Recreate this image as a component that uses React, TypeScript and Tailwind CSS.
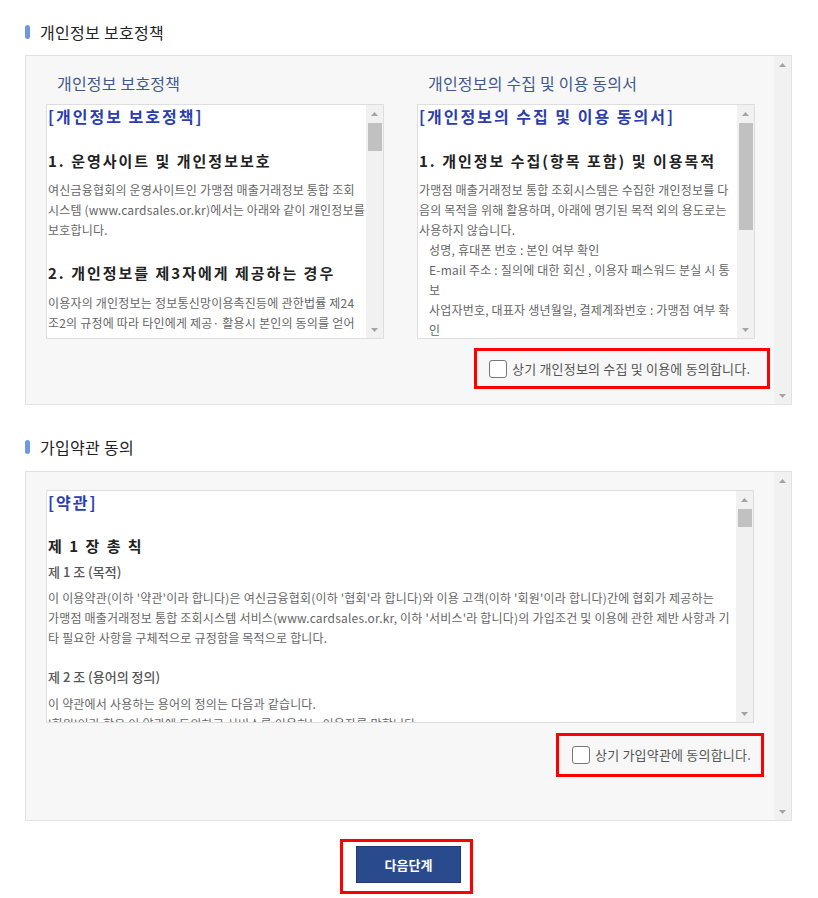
import React from "react";

// small triangle used by the fake scrollbars
function Arrow({ down = false }: { down?: boolean }) {
  return (
    <svg width="7" height="4" viewBox="0 0 7 4" className="block">
      {down ? (
        <path d="M0 0H7L3.5 4Z" fill="#a3a3a3" />
      ) : (
        <path d="M3.5 0L7 4H0Z" fill="#a3a3a3" />
      )}
    </svg>
  );
}

function ScrollBar({ thumb }: { thumb?: string }) {
  return (
    <div className="flex w-[17px] shrink-0 flex-col bg-[#f1f1f1]">
      <div className="flex h-[17px] items-center justify-center">
        <Arrow />
      </div>
      {thumb && <div className={`mt-px ml-[2px] mr-px bg-[#c1c1c1] ${thumb}`} />}
      <div className="flex-1" />
      <div className="flex h-[17px] items-center justify-center">
        <Arrow down />
      </div>
    </div>
  );
}

function Lines({ lines, className = "" }: { lines: string[]; className?: string }) {
  return (
    <div className={`text-[12px] leading-[20px] tracking-[0.2px] text-[#666] ${className}`}>
      {lines.map((l, i) => (
        <p key={i} className="whitespace-nowrap">
          {l}
        </p>
      ))}
    </div>
  );
}

function Check({ label }: { label: string }) {
  return (
    <span className="flex items-center gap-[5px]">
      <span className="h-[18px] w-[18px] shrink-0 rounded-[3px] border-[1.5px] border-[#777] bg-white" />
      <span className="whitespace-nowrap text-[13px] tracking-[0.2px] text-[#555]">{label}</span>
    </span>
  );
}

function SectionTitle({ children }: { children: React.ReactNode }) {
  return (
    <div className="flex h-[20px] items-center">
      <span className="h-[14px] w-[5px] rounded-[3px] bg-[#6f99df]" />
      <h2 className="ml-[10px] text-[16px] leading-[20px] tracking-[0.3px] text-[#222]">{children}</h2>
    </div>
  );
}

const blueHead = "text-[16px] font-semibold leading-[22px] tracking-[2px] text-[#2b3daf] whitespace-nowrap";
const blackHead = "text-[15px] font-bold leading-[22px] tracking-[2px] text-[#222] whitespace-nowrap";

export default function App() {
  return (
    <div className="w-[818px] bg-white pb-[6px] pl-[25px] pr-[26px] pt-[22px] font-['Noto_Sans_CJK_KR','Noto_Sans',sans-serif]">
      {/* 개인정보 보호정책 */}
      <SectionTitle>개인정보 보호정책</SectionTitle>
      <div className="mt-[13px] flex h-[350px] border border-[#e2e2e2] bg-[#f7f7f7]">
        <div className="min-w-0 flex-1 pt-[16px]">
          <div className="flex gap-[33px] pl-[20px]">
            <div className="w-[338px]">
              <h3 className="pl-[11px] text-[16px] leading-[22px] tracking-[0.2px] text-[#41598f]">개인정보 보호정책</h3>
              <div className="mt-[10px] flex h-[235px] border border-[#dedede] bg-white">
                <div className="min-w-0 flex-1 overflow-hidden pl-px">
                  <p className={blueHead}>[개인정보 보호정책]</p>
                  <p className={`mt-[23px] ${blackHead}`}>1. 운영사이트 및 개인정보보호</p>
                  <Lines
                    className="mt-[8px]"
                    lines={[
                      "여신금융협회의 운영사이트인 가맹점 매출거래정보 통합 조회",
                      "시스템 (www.cardsales.or.kr)에서는 아래와 같이 개인정보를",
                      "보호합니다.",
                    ]}
                  />
                  <p className={`mt-[22px] ${blackHead}`}>2. 개인정보를 제3자에게 제공하는 경우</p>
                  <Lines
                    className="mt-[9px]"
                    lines={[
                      "이용자의 개인정보는 정보통신망이용촉진등에 관한법률 제24",
                      "조2의 규정에 따라 타인에게 제공· 활용시 본인의 동의를 얻어",
                    ]}
                  />
                </div>
                <ScrollBar thumb="h-[28px]" />
              </div>
            </div>
            <div className="w-[338px]">
              <h3 className="pl-[11px] text-[16px] leading-[22px] tracking-[0.2px] text-[#41598f]">개인정보의 수집 및 이용 동의서</h3>
              <div className="mt-[10px] flex h-[235px] border border-[#dedede] bg-white">
                <div className="min-w-0 flex-1 overflow-hidden pl-px">
                  <p className={blueHead}>[개인정보의 수집 및 이용 동의서]</p>
                  <p className={`mt-[23px] ${blackHead}`}>1. 개인정보 수집(항목 포함) 및 이용목적</p>
                  <Lines
                    className="mt-[8px]"
                    lines={[
                      "가맹점 매출거래정보 통합 조회시스템은 수집한 개인정보를 다",
                      "음의 목적을 위해 활용하며, 아래에 명기된 목적 외의 용도로는",
                      "사용하지 않습니다.",
                    ]}
                  />
                  <Lines
                    className="pl-[10px]"
                    lines={[
                      "성명, 휴대폰 번호 : 본인 여부 확인",
                      "E-mail 주소 : 질의에 대한 회신 , 이용자 패스워드 분실 시 통",
                      "보",
                      "사업자번호, 대표자 생년월일, 결제계좌번호 : 가맹점 여부 확",
                      "인",
                    ]}
                  />
                </div>
                <ScrollBar thumb="h-[107px]" />
              </div>
            </div>
          </div>
          <div className="mt-[9px] flex justify-end pr-[4px]">
            <label className="flex h-[41px] w-[296px] items-center border-[3px] border-[#ff0000] pl-[12px]">
              <Check label="상기 개인정보의 수집 및 이용에 동의합니다." />
            </label>
          </div>
        </div>
        <ScrollBar />
      </div>

      {/* 가입약관 동의 */}
      <div className="mt-[32px]">
        <SectionTitle>가입약관 동의</SectionTitle>
      </div>
      <div className="mt-[14px] flex h-[350px] border border-[#e2e2e2] bg-[#f7f7f7]">
        <div className="min-w-0 flex-1 pt-[18px]">
          <div className="ml-[20px] flex h-[233px] w-[708px] border border-[#dedede] bg-white">
            <div className="min-w-0 flex-1 overflow-hidden pl-px">
              <p className={blueHead}>[약관]</p>
              <p className={`mt-[22px] ${blackHead} tracking-[2.5px]`}>제 1 장 총 칙</p>
              <p className="mt-[5px] text-[13px] font-medium leading-[20px] tracking-[0px] text-[#555]">제 1 조 (목적)</p>
              <Lines
                className="mt-[6px] text-[#555]"
                lines={[
                  "이 이용약관(이하 '약관'이라 합니다)은 여신금융협회(이하 '협회'라 합니다)와 이용 고객(이하 '회원'이라 합니다)간에 협회가 제공하는",
                  "가맹점 매출거래정보 통합 조회시스템 서비스(www.cardsales.or.kr, 이하 '서비스'라 합니다)의 가입조건 및 이용에 관한 제반 사항과 기",
                  "타 필요한 사항을 구체적으로 규정함을 목적으로 합니다.",
                ]}
              />
              <p className="mt-[19px] text-[13px] font-medium leading-[20px] tracking-[0px] text-[#555]">제 2 조 (용어의 정의)</p>
              <Lines
                className="mt-[7px] text-[#555]"
                lines={[
                  "이 약관에서 사용하는 용어의 정의는 다음과 같습니다.",
                  "'회원'이라 함은 이 약관에 동의하고 서비스를 이용하는 이용자를 말합니다.",
                ]}
              />
            </div>
            <ScrollBar thumb="h-[18px]" />
          </div>
          <div className="mt-[10px] flex justify-end pr-[10px]">
            <label className="flex h-[44px] w-[208px] items-center border-[3px] border-[#ff0000] pl-[13px]">
              <Check label="상기 가입약관에 동의합니다." />
            </label>
          </div>
        </div>
        <ScrollBar />
      </div>

      {/* 다음단계 */}
      <div className="mt-[18px] pl-[315px]">
        <div className="h-[55px] w-[133px] border-[3px] border-[#ff0000] pl-[13px] pt-[4px]">
          <button className="h-[37px] w-[105px] border border-[#1f3a75] bg-[#2a4a8e] text-[13px] font-semibold tracking-[0px] text-white">
            다음단계
          </button>
        </div>
      </div>
    </div>
  );
}
